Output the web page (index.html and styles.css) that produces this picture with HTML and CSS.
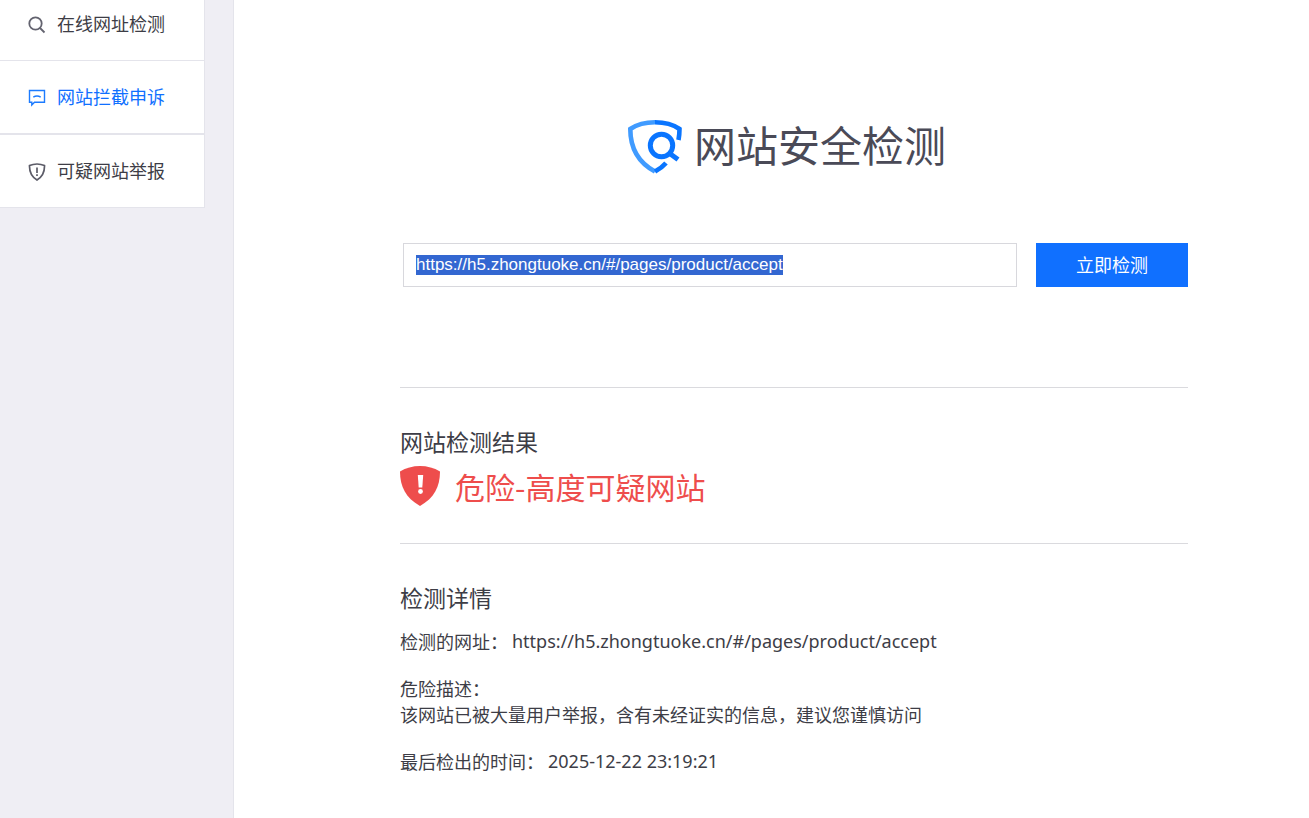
FILE: index.html
```html
<!DOCTYPE html>
<html lang="zh-CN">
<head>
<meta charset="utf-8">
<meta name="viewport" content="width=device-width, initial-scale=1">
<title>网站安全检测</title>
<link rel="stylesheet" href="styles.css">
</head>
<body>
<div class="layout">
  <aside class="sidebar">
    <nav class="menu">
      <a class="menu-item menu-first" href="#check">
        <svg class="menu-icon" viewBox="0 0 18 18" fill="none" stroke="#63636f" stroke-width="1.8"><circle cx="7.500" cy="7.500" r="6.200"/><path d="M12 12l4.500 4.500"/></svg>
        <span>在线网址检测</span>
      </a>
      <a class="menu-item menu-active" href="#appeal">
        <svg class="menu-icon" viewBox="0 0 18 18" fill="none" stroke="#1c7bff" stroke-width="1.4"><path d="M1.500 1.500h15v11.800H6.500l-2.700 2.700v-2.700H1.500z"/><path d="M5.300 8.200q3.700-2.400 7.400 0"/></svg>
        <span>网站拦截申诉</span>
      </a>
      <a class="menu-item" href="#report">
        <svg class="menu-icon" viewBox="0 0 18 18" fill="none" stroke="#5c5c68" stroke-width="1.700"><path d="M9 1q4 0 7.500 1.600c.2 6.400-1.600 11-7.500 14.500C3.100 13.600 1.300 9 1.500 2.600Q5 1 9 1z"/><path d="M9 4.500v5.500M9 11.200v1.800"/></svg>
        <span>可疑网站举报</span>
      </a>
    </nav>
  </aside>
  <main class="content">
    <h1 class="brand">
      <svg class="brand-icon" viewBox="0 0 54 54" fill="none" stroke-width="4.600"><path stroke="#409bff" d="M27 2.300C18 2.300 9 4.500 2.300 9c0 19 7 33 24.700 42.500"/><path stroke="#0a75ff" d="M27 2.300c9 0 18 2.200 24.500 6.700 0 4-.4 7.500-1 11M27 51.500c4.500-2.500 8-5 11-8.500"/><circle cx="33.500" cy="25.500" r="11.200" stroke="#0a75ff" stroke-width="5"/><path stroke="#0a75ff" stroke-width="5" d="M41 33l9 6.500"/></svg>
      <span class="brand-name">网站安全检测</span>
    </h1>
    <form class="search" id="check">
      <input class="search-input" type="text" aria-label="网址" value="https://h5.zhongtuoke.cn/#/pages/product/accept" spellcheck="false">
      <button class="search-button" type="button">立即检测</button>
    </form>
    <section class="result">
      <h2 class="title">网站检测结果</h2>
      <p class="verdict">
        <svg class="verdict-icon" viewBox="0 0 40 40"><path fill="#ee4d4c" d="M20 0q11 0 20 5.500C40 21 34 32 20 40 6 32 0 21 0 5.500Q9 0 20 0z"/><path fill="#fff" d="M17.800 9h5.400l-.9 12.500h-3.600z"/><circle cx="20.500" cy="25.500" r="2.400" fill="#fff"/></svg>
        <span>危险-高度可疑网站</span>
      </p>
    </section>
    <section class="details">
      <h2 class="title">检测详情</h2>
      <dl class="facts">
        <div class="fact fact-row"><dt>检测的网址：</dt><dd class="latin">https://h5.zhongtuoke.cn/#/pages/product/accept</dd></div>
        <div class="fact"><dt>危险描述：</dt><dd>该网站已被大量用户举报，含有未经证实的信息，建议您谨慎访问</dd></div>
        <div class="fact fact-row"><dt>最后检出的时间：</dt><dd class="latin">2025-12-22 23:19:21</dd></div>
      </dl>
    </section>
  </main>
</div>
<script src="app.js"></script>
</body>
</html>
```
FILE: styles.css
```css
* { box-sizing: border-box; }

body {
  margin: 0;
  color: #3d3d46;
  background: #fff;
  font-family: "Noto Sans CJK SC", sans-serif;
  font-size: 18px;
  line-height: 26px;
}

h1, h2, p, dl, dd { margin: 0; font-weight: 400; }

.layout { display: flex; min-height: 100vh; }

.sidebar {
  flex: 0 0 234px;
  background: #efeef4;
  border-right: 1px solid #e4e4eb;
}

.menu {
  width: 205px;
  background: #fff;
  border-right: 1px solid #e4e4eb;
}

.menu-item {
  display: flex;
  align-items: center;
  gap: 11px;
  height: 73px;
  padding: 0 0 2px 28px;
  color: #3d3d46;
  text-decoration: none;
  border-bottom: 1px solid #e4e4eb;
}

.menu-first { height: 61px; padding-bottom: 14px; }
.menu-active { height: 74px; color: #1070ff; border-bottom-width: 2px; }
.menu-icon { width: 18px; height: 18px; margin-top: 4px; }

.content { flex: 1; padding: 116px 121px 40px 166px; }

.brand {
  display: flex;
  justify-content: center;
  align-items: flex-start;
  gap: 12px;
  padding-right: 14px;
  font-size: 42px;
  line-height: 56px;
  color: #4a4a57;
}

.brand-icon { width: 54px; height: 54px; margin-top: 4px; }

.search {
  display: flex;
  gap: 19px;
  margin-top: 69px;
  padding: 0 0 100px 3px;
  border-bottom: 1px solid #dadade;
}

.search-input {
  flex: 1;
  min-width: 0;
  height: 44px;
  padding: 0 12px;
  border: 1px solid #d8d8dd;
  outline: none;
  color: #3d3d46;
  font: 17px "Liberation Sans", sans-serif;
}

.search-input::selection { color: #fff; background: #3367d1; }

.search-button {
  width: 152px;
  height: 44px;
  padding: 0 0 2px;
  border: 0;
  color: #fff;
  background: #1070ff;
  font: inherit;
}

.title { font-size: 23px; line-height: 34px; }

.result { padding: 36px 0 35px; border-bottom: 1px solid #dadade; }

.verdict {
  display: flex;
  align-items: center;
  gap: 15px;
  margin-top: 6px;
  color: #ee4d4c;
  font-size: 30px;
  line-height: 44px;
}

.verdict-icon { width: 40px; height: 40px; }

.details { padding-top: 36px; }

.facts {
  display: flex;
  flex-direction: column;
  gap: 21px;
  margin-top: 14px;
}

.fact-row { display: flex; gap: 4px; }
.latin { font-family: "Noto Sans", sans-serif; }
```
FILE: app.js
```js
const field = document.querySelector(".search-input");
field.focus();
field.select();
```
